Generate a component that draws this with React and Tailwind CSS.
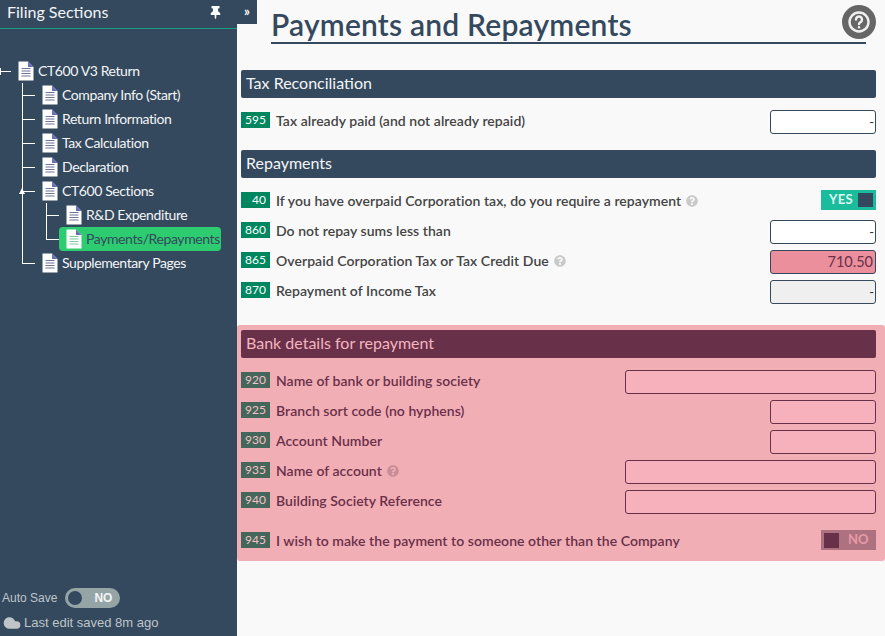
import React from "react";
import { Cloud } from "lucide-react";
import { FaThumbtack, FaQuestionCircle } from "react-icons/fa";

function FileIcon({ active }) {
  const line = active ? "#7fc8a0" : "#6b7396";
  return (
    <svg width="16" height="20" viewBox="0 0 16 20" className="shrink-0">
      <path d="M0.5 0.5H10L15.5 6V19.5H0.5Z" fill="#fff" />
      <path d="M10 0.5L15.5 6H10Z" fill="#6a6fb5" />
      <path d={"M3.5 7.5H12.5M3.5 10H12.5M3.5 12.5H12.5M3.5 15H12.5"} stroke={line} strokeWidth="1.2" />
    </svg>
  );
}

function TreeRow({ label, level, active, last, expander }) {
  const pad = level === 0 ? "pl-[18px]" : level === 1 ? "pl-[42px]" : "pl-[66px]";
  return (
    <div className={`relative h-6 flex items-center ${pad}`}>
      {active && <div className="absolute left-[59px] top-0 w-[162px] h-6 bg-[#2ecc71] rounded-sm" />}
      <span className="relative z-10 flex items-center">
        <FileIcon active={active} />
        <span className={`ml-1 -mt-[2px] text-[14px] tracking-[-0.4px] whitespace-nowrap ${active ? "text-[#34495e]" : "text-[#f3f5f6]"}`}>{label}</span>
      </span>
      {level === 0 && <div className="absolute left-0 top-3 w-[11px] h-px bg-white" />}
      {level === 0 && <div className="absolute left-0 top-[9px] w-px h-[7px] bg-white" />}
      {level === 1 && <div className="absolute left-[22px] top-3 w-[13px] h-px bg-white" />}
      {level === 1 && <div className={`absolute left-[22px] top-0 w-px ${last ? "h-3" : "h-6"} bg-white`} />}
      {level === 2 && <div className="absolute left-[46px] top-3 w-[13px] h-px bg-white" />}
      {level === 2 && <div className={`absolute left-[46px] top-0 w-px ${last ? "h-3" : "h-6"} bg-white`} />}
      {level === 2 && <div className="absolute left-[22px] top-0 w-px h-6 bg-white" />}
      {expander && <div className="absolute left-[19px] top-[9px] w-0 h-0 border-l-[3.5px] border-r-[3.5px] border-b-[6px] border-l-transparent border-r-transparent border-b-white" />}
    </div>
  );
}

function Badge({ children, bank }) {
  return (
    <span className={`w-[29px] h-4 -mt-[2px] shrink-0 text-right pr-[4px] text-[12px] leading-[15px] ${bank ? "bg-[#45665a] text-[#f3c3c8]" : "bg-[#00875f] text-white"}`}>
      {children}
    </span>
  );
}

function Row({ code, label, help, bank, children, className = "" }) {
  return (
    <div className={`h-[30px] flex items-center pl-1 pr-[9px] ${className}`}>
      <Badge bank={bank}>{code}</Badge>
      <span className={`ml-[6px] -mt-[2px] text-[14px] font-semibold tracking-[0.05px] whitespace-nowrap ${bank ? "text-[#69304a]" : "text-[#444]"}`}>
        {label}
        {help && <FaQuestionCircle size={12} className={`ml-[5px] inline-block align-[-1px] ${bank ? "text-[#c98d98]" : "text-[#c9c9c9]"}`} />}
      </span>
      <div className="ml-auto flex">{children}</div>
    </div>
  );
}

function Amount({ value = "-", tone = "white" }) {
  const bg = tone === "pink" ? "bg-[#ea8f9b] text-[#69304a]" : tone === "gray" ? "bg-[#efefef] text-[#333]" : "bg-white text-[#333]";
  const size = tone === "pink" ? "text-[14.5px] pr-[2px]" : "text-[13px] pr-px";
  return (
    <div className={`w-[106px] h-6 mt-[2px] rounded-[3px] border border-[#34495e] text-right leading-[22px] ${bg} ${size}`}>{value}</div>
  );
}

function BankInput({ wide }) {
  return <div className={`${wide ? "w-[251px]" : "w-[106px]"} h-6 mt-[2px] rounded-[3px] border border-[#69304a] bg-[#f6b1bd]`} />;
}

function Header({ children, bank }) {
  return (
    <div className={`h-7 ml-1 mr-[9px] pl-[5px] rounded-[2px] text-[16px] leading-[26px] ${bank ? "bg-[#69304a] text-[#f4b5bf]" : "bg-[#34495e] text-[#f3f5f6]"}`}>
      {children}
    </div>
  );
}

export default function App() {
  return (
    <div className="w-[885px] h-[636px] flex overflow-hidden bg-[#f9f9f9] font-['Lato','Carlito',sans-serif]">
      <aside className="w-[237px] h-full shrink-0 bg-[#34495e] flex flex-col">
        <div className="h-[29px] border-b border-[#16a085] flex items-center pl-[7px] pr-[15px] shrink-0">
          <span className="text-[16px] text-[#f3f5f6] leading-[24px] -mt-[4px]">Filing Sections</span>
          <FaThumbtack size={13} className="ml-auto -mt-[3px] text-white" />
        </div>
        <div className="mt-[30px]">
          <TreeRow level={0} label="CT600 V3 Return" />
          <TreeRow level={1} label="Company Info (Start)" />
          <TreeRow level={1} label="Return Information" />
          <TreeRow level={1} label="Tax Calculation" />
          <TreeRow level={1} label="Declaration" />
          <TreeRow level={1} label="CT600 Sections" expander />
          <TreeRow level={2} label="R&D Expenditure" />
          <TreeRow level={2} label="Payments/Repayments" active last />
          <TreeRow level={1} label="Supplementary Pages" last />
        </div>
        <div className="mt-auto pb-[5px] pl-[2px] font-['Liberation_Sans',sans-serif]">
          <div className="flex items-center h-5 -translate-y-px">
            <span className="text-[12px] text-[#bfc5c9]">Auto Save</span>
            <span className="ml-2 w-[55px] h-5 rounded-full bg-[#95a5a6] flex items-center pl-[3px]">
              <span className="w-[14px] h-[14px] rounded-full bg-[#34495e]" />
              <span className="ml-[12px] text-[12px] font-bold text-[#f3f5f6]">NO</span>
            </span>
          </div>
          <div className="mt-[5px] flex items-center h-[17px] text-[13px] text-[#bfc5c9]">
            <Cloud size={20} fill="#bfc5c9" strokeWidth={0} className="shrink-0" />
            <span className="ml-[2px]">Last edit saved 8m ago</span>
          </div>
        </div>
      </aside>

      <main className="flex-1 relative min-w-0">
        <div className="absolute left-0 top-0 w-5 h-6 bg-[#34495e] text-white text-[13px] font-bold text-center leading-[22px]">»</div>
        <div className="h-[44px] ml-[34px] mr-[19px] border-b-2 border-[#34495e]">
          <h1 className="text-[30px] font-semibold tracking-[0.2px] text-[#34495e] leading-[48px] whitespace-nowrap">Payments and Repayments</h1>
        </div>
        <div className="absolute right-[9px] top-[5px] w-[34px] h-[34px] rounded-full bg-[#666] flex items-center justify-center">
          <svg width="24" height="24" viewBox="0 0 24 24" fill="none" stroke="#f0f0f0" strokeWidth="2.4" strokeLinecap="round">
            <circle cx="12" cy="12" r="9.5" />
            <path d="M9 9.5a3 3 0 1 1 4.5 2.6c-1 .6-1.5 1-1.5 2" />
            <path d="M12 17.2v.1" />
          </svg>
        </div>

        <div className="mt-[26px]">
          <Header>Tax Reconciliation</Header>
          <div className="mt-[8px]">
            <Row code="595" label="Tax already paid (and not already repaid)"><Amount /></Row>
          </div>
        </div>

        <div className="mt-[14px]">
          <Header>Repayments</Header>
          <div className="mt-[8px]">
            <Row code="40" label="If you have overpaid Corporation tax, do you require a repayment" help>
              <span className="w-[55px] h-5 -mt-[2px] bg-[#1abc9c] flex items-center pl-2 pr-[3px] justify-between">
                <span className="text-[13px] font-bold text-[#dff5f0] tracking-[0.3px]">YES</span>
                <span className="w-[15px] h-[14px] bg-[#34495e]" />
              </span>
            </Row>
            <Row code="860" label="Do not repay sums less than"><Amount /></Row>
            <Row code="865" label="Overpaid Corporation Tax or Tax Credit Due" help><Amount value="710.50" tone="pink" /></Row>
            <Row code="870" label="Repayment of Income Tax"><Amount tone="gray" /></Row>
          </div>
        </div>

        <section className="mt-[19px] h-[236px] bg-[#f2aeb5] rounded-[3px] pt-[5px]">
          <Header bank>Bank details for repayment</Header>
          <div className="mt-[8px]">
            <Row bank code="920" label="Name of bank or building society"><BankInput wide /></Row>
            <Row bank code="925" label="Branch sort code (no hyphens)"><BankInput /></Row>
            <Row bank code="930" label="Account Number"><BankInput /></Row>
            <Row bank code="935" label="Name of account" help><BankInput wide /></Row>
            <Row bank code="940" label="Building Society Reference"><BankInput wide /></Row>
            <Row bank code="945" label="I wish to make the payment to someone other than the Company" className="mt-[10px]">
              <span className="w-[55px] h-5 -mt-[2px] bg-[#ad7180] flex items-center pl-[3px]">
                <span className="w-[15px] h-[15px] bg-[#69304a]" />
                <span className="ml-[9px] text-[13px] font-bold text-[#e89aa8]">NO</span>
              </span>
            </Row>
          </div>
        </section>
      </main>
    </div>
  );
}
